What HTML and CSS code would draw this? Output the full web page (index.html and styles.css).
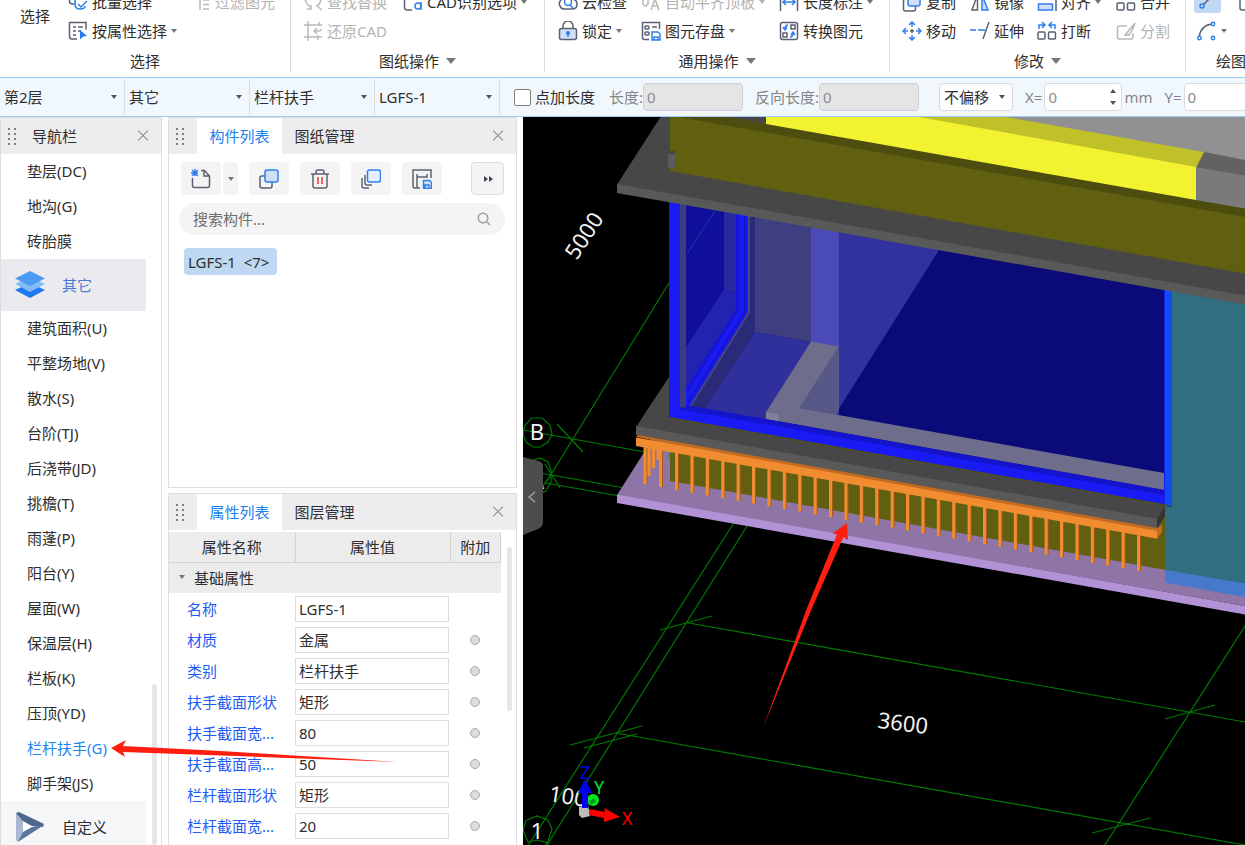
FILE: index.html
```html
<!DOCTYPE html>
<html lang="zh-CN">
<head>
<meta charset="utf-8">
<meta name="viewport" content="width=device-width, initial-scale=1">
<title>栏杆扶手</title>
<link rel="stylesheet" href="styles.css">
</head>
<body>
<div class="app">
  <header class="ribbon">
    <section class="group group-select">
      <div class="tools">
        <button class="tool big">选择</button>
        <div class="stack">
          <button class="tool"><svg class="icon" viewBox="0 0 20 20"><path d="M1.500 4v5q0 3 3 3h2" class="ink"/><path d="M7 8v4q0 5 5 5 5 0 5-3M10 12l3 3 6-6" class="blue"/></svg>批量选择</button>
          <button class="tool"><svg class="icon" viewBox="0 0 20 20"><path d="M9 18H4q-2.500 0-2.500-2.500V1.500h16.500v7M5 6h3M10 6h5M5 10h3M10 10h3M5 14h3" class="ink"/><path d="M12 9l7 6-4 .5-3 3z" class="fill-blue"/></svg>按属性选择<i class="caret"></i></button>
        </div>
        <div class="stack">
          <button class="tool" disabled><svg class="icon" viewBox="0 0 20 20"><path d="M9 4v14M12 8h6M12 12.500h6M12 17h6" class="mute"/></svg>过滤图元</button>
          <span class="tool"></span>
        </div>
      </div>
      <div class="caption">选择</div>
    </section>
    <section class="group group-drawing">
      <div class="tools">
        <div class="stack">
          <button class="tool" disabled><svg class="icon" viewBox="0 0 20 20"><path d="M2 5q0 7 6 10M4 17h4v-4M18 5q0 7-4 9l5 4" class="mute"/></svg>查找替换</button>
          <button class="tool" disabled><svg class="icon" viewBox="0 0 20 20"><path d="M5 0v20M1 4h18M1 16h14M16 1v4M11 10h5q2 0 2-2M14 7l-3 3 3 3M15 14v5M15 16h4" class="mute"/></svg>还原CAD</button>
        </div>
        <div class="stack">
          <button class="tool"><svg class="icon" viewBox="0 0 20 20"><path d="M1.500 2v13q0 3 3 3H9" class="ink"/><circle cx="15" cy="14" r="3" class="blue"/><path d="M18 10v8" class="blue"/></svg>CAD识别选项<i class="caret"></i></button>
          <span class="tool"></span>
        </div>
      </div>
      <div class="caption">图纸操作<i class="caret wide"></i></div>
    </section>
    <section class="group group-common">
      <div class="tools">
        <div class="stack">
          <button class="tool"><svg class="icon" viewBox="0 0 20 20"><path d="M4 7q-4 3-2 7 1 3 4 3h8q5 0 5-5 0-4-4-5" class="ink"/><circle cx="10" cy="10" r="3.500" class="blue"/><path d="M12 13l3 3" class="blue"/></svg>云检查</button>
          <button class="tool"><svg class="icon" viewBox="0 0 20 20"><path d="M5 8V5a5 5 0 0 1 10 0v3" class="ink"/><rect x="1.500" y="7.500" width="17" height="11" rx="2" class="ink tint"/><circle cx="10" cy="12" r="2" class="fill-blue"/><path d="M10 13v3" class="blue"/></svg>锁定<i class="caret"></i></button>
        </div>
        <div class="stack">
          <button class="tool" disabled><svg class="icon" viewBox="0 0 20 20"><path d="M2 4v8q2 4 5 0V4M10 18l4-11 4 11M11 14h6" class="mute"/></svg>自动平齐顶板<i class="caret"></i></button>
          <button class="tool"><svg class="icon" viewBox="0 0 20 20"><path d="M8 18.500H3.500q-2 0-2-2v-15h17V8" class="ink"/><rect x="4" y="5" width="4" height="3" rx="1" class="ink"/><rect x="4" y="11" width="4" height="3" rx="1" class="ink"/><path d="M11 6h5" class="ink"/><path d="M11 11h6l2 2v6h-8zM13 19v-3h4v3" class="blue"/></svg>图元存盘<i class="caret"></i></button>
        </div>
        <div class="stack">
          <button class="tool"><svg class="icon" viewBox="0 0 20 20"><path d="M1.500 4v15M18.500 4v15" class="ink"/><path d="M4 10h12M7 7l-3 3 3 3M13 7l3 3-3 3" class="blue"/></svg>长度标注<i class="caret"></i></button>
          <button class="tool"><svg class="icon" viewBox="0 0 20 20"><rect x="1.500" y="1.500" width="17" height="17" rx="2" class="ink"/><rect x="12" y="4" width="4" height="4" class="ink"/><rect x="4" y="12" width="4" height="4" class="ink"/><path d="M9 4q-3 0-3 4M4 6l2 3 2-3M11 16q3 0 3-4M12 14l2-3 2 3" class="blue"/></svg>转换图元</button>
        </div>
      </div>
      <div class="caption">通用操作<i class="caret wide"></i></div>
    </section>
    <section class="group group-modify">
      <div class="tools">
        <div class="stack">
          <button class="tool"><svg class="icon" viewBox="0 0 20 20"><rect x="1.500" y="7" width="12" height="12" rx="2" class="ink"/><rect x="6" y="2" width="12" height="12" rx="2" class="blue tint"/></svg>复制</button>
          <button class="tool"><svg class="icon" viewBox="0 0 20 20"><path d="M10 1v5M7 4l3-3 3 3M10 14v5M7 16l3 3 3-3M1 10h5M4 7l-3 3 3 3M14 10h5M16 7l3 3-3 3" class="blue"/><path d="M8 10h4M10 8v4" class="ink"/></svg>移动</button>
        </div>
        <div class="stack">
          <button class="tool"><svg class="icon" viewBox="0 0 20 20"><path d="M7.500 3v15H2z" class="ink"/><path d="M12 3v15h6z" class="blue tint"/></svg>镜像</button>
          <button class="tool"><svg class="icon" viewBox="0 0 20 20"><path d="M0 9h6M8 9h7" class="blue"/><path d="M19 1l-6 17" class="ink"/></svg>延伸</button>
        </div>
        <div class="stack">
          <button class="tool"><svg class="icon" viewBox="0 0 20 20"><rect x="1.500" y="12" width="14" height="6" class="blue tint"/><path d="M19 3v16" class="ink"/></svg>对齐<i class="caret"></i></button>
          <button class="tool"><svg class="icon" viewBox="0 0 20 20"><rect x="1" y="11" width="7" height="7" rx="1" class="ink"/><rect x="11.500" y="11" width="7" height="7" rx="1" class="ink"/><path d="M2 8V4h5M5 1l3 3-3 3M18 8V4h-5M15 1l-3 3 3 3" class="blue"/></svg>打断</button>
        </div>
        <div class="stack">
          <button class="tool"><svg class="icon" viewBox="0 0 20 20"><path d="M2 7V3h15v4" class="ink"/><rect x="1" y="11" width="7" height="7" rx="1" class="ink"/><rect x="11.500" y="11" width="7" height="7" rx="1" class="ink"/></svg>合并</button>
          <button class="tool" disabled><svg class="icon" viewBox="0 0 20 20"><path d="M11 5H3Q1.500 5 1.500 7v9q0 2 2 2H15q2 0 2-2v-4M19 2L9 14h4q4-5 6-12z" class="mute"/></svg>分割</button>
        </div>
      </div>
      <div class="caption">修改<i class="caret wide"></i></div>
    </section>
    <section class="group group-draw">
      <div class="tools">
        <div class="stack">
          <button class="tool on" aria-label="直线"><svg class="icon" viewBox="0 0 20 20"><path d="M5 15L17 3" class="ink"/><circle cx="4" cy="16" r="2" class="blue"/></svg></button>
          <button class="tool pad" aria-label="弧线"><svg class="icon" viewBox="0 0 20 20"><path d="M2 16Q4 4 15 3" class="ink"/><circle cx="2.500" cy="17" r="1.700" class="blue"/><circle cx="16" cy="3" r="1.700" class="blue"/><circle cx="16" cy="17" r="1.700" class="blue"/></svg><i class="caret"></i></button>
        </div>
        <div class="stack">
          <button class="tool" aria-label="矩形"><svg class="icon" viewBox="0 0 20 20"><rect x="1" y="1" width="17" height="17" rx="2" class="ink"/></svg></button>
          <span class="tool"></span>
        </div>
      </div>
      <div class="caption">绘图</div>
    </section>
  </header>

  <form class="options">
    <span class="pick flat"><select aria-label="楼层"><option>第2层</option></select></span>
    <span class="pick flat"><select aria-label="构件大类"><option>其它</option></select></span>
    <span class="pick flat"><select aria-label="构件类型"><option>栏杆扶手</option></select></span>
    <span class="pick flat"><select aria-label="构件"><option>LGFS-1</option></select></span>
    <label class="check"><input type="checkbox">点加长度</label>
    <label class="field">长度:<input type="text" value="0" disabled></label>
    <label class="field">反向长度:<input type="text" value="0" disabled></label>
    <span class="rule"></span>
    <span class="pick boxed"><select aria-label="偏移方式"><option>不偏移</option></select></span>
    <label class="field near">X=<span class="spin"><input type="text" value="0"></span>mm</label>
    <label class="field near">Y=<span class="spin"><input type="text" value="0"></span>mm</label>
  </form>

  <main class="workspace">
    <nav class="panel nav">
      <div class="panel-head"><i class="grip"></i><h2>导航栏</h2><button class="close" aria-label="关闭"></button></div>
      <div class="nav-body">
        <div class="nav-list">
          <a href="#">垫层(DC)</a>
          <a href="#">地沟(G)</a>
          <a href="#">砖胎膜</a>
          <button class="category current"><svg viewBox="0 0 32 32"><path d="M16 14l15 7-15 8-15-8z" fill="#1f78f0"/><path d="M16 8l15 7-15 8-15-8z" fill="#83bbf5"/><path d="M16 2l15 7.500-15 7.500L1 9.500z" fill="#4b9bf2"/></svg>其它</button>
          <a href="#">建筑面积(U)</a>
          <a href="#">平整场地(V)</a>
          <a href="#">散水(S)</a>
          <a href="#">台阶(TJ)</a>
          <a href="#">后浇带(JD)</a>
          <a href="#">挑檐(T)</a>
          <a href="#">雨蓬(P)</a>
          <a href="#">阳台(Y)</a>
          <a href="#">屋面(W)</a>
          <a href="#">保温层(H)</a>
          <a href="#">栏板(K)</a>
          <a href="#">压顶(YD)</a>
          <a href="#" class="active">栏杆扶手(G)</a>
          <a href="#">脚手架(JS)</a>
          <button class="category"><svg viewBox="0 0 32 32"><path d="M2 2l7 5v18l-5 6-2-2z" fill="#aab8d2"/><path d="M2 2l3-1 25 12-1 3-11-1L9 10z" fill="#4f678f"/><path d="M9 21v-9l9 4z" fill="#fff"/><path d="M9 21l9-5 12-2L4 31z" fill="#5d749d"/></svg>自定义</button>
        </div>
        <i class="thumb nav-thumb"></i>
      </div>
    </nav>

    <div class="side">
      <section class="panel components">
        <div class="panel-head"><i class="grip"></i><div class="tabs"><button class="tab on">构件列表</button><button class="tab">图纸管理</button></div><button class="close" aria-label="关闭"></button></div>
        <div class="bar">
          <span class="split"><button class="act" aria-label="新建"><svg class="icon" viewBox="0 0 20 20"><path d="M1.500 9v7.500q0 2 2 2h13q2 0 2-2V7l-5-5.500H10M13 2v5h5" class="ink"/><path d="M4 0v7M1 1l6 6M7 1L1 7M0 4h7" class="blue"/></svg></button><button class="act slim" aria-label="新建选项"><i class="caret"></i></button></span>
          <button class="act" aria-label="复制"><svg class="icon" viewBox="0 0 20 20"><rect x="1" y="7" width="12" height="12" rx="2" class="ink"/><rect x="6" y="1" width="13" height="12" rx="2" class="blue tint"/></svg></button>
          <button class="act" aria-label="删除"><svg class="icon" viewBox="0 0 20 20"><path d="M1 5h18M6 5V3q0-2 2-2h4q2 0 2 2v2M3 5v12q0 2 2 2h10q2 0 2-2V5" class="ink"/><path d="M8 8v7M12 8v7" stroke="#e04444" fill="none" stroke-width="1.600"/></svg></button>
          <button class="act" aria-label="层间复制"><svg class="icon" viewBox="0 0 20 20"><path d="M1 9v8q0 2 2 2h5M4 6v8q0 2 2 2h5" class="ink"/><rect x="6.500" y="1" width="13" height="12" rx="2" class="blue tint-light"/></svg></button>
          <button class="act" aria-label="存档"><svg class="icon" viewBox="0 0 20 20"><path d="M8 19H3q-2 0-2-2V1h18v8M5 19V5M15 5v4M5 8h10" class="ink"/><path d="M11.500 11.500h6l2 2v6h-8zM13 19v-3h4v3" class="blue tint"/></svg></button>
          <button class="act more" aria-label="更多"><svg class="icon" viewBox="0 0 20 20"><path d="M6 7l4 3-4 3zM11 7l4 3-4 3z" fill="#3d4250"/></svg></button>
        </div>
        <div class="search"><input type="text" placeholder="搜索构件..." aria-label="搜索构件"><svg viewBox="0 0 14 14"><circle cx="6" cy="6" r="4.700"/><path d="M10 10l3 3"/></svg></div>
        <button class="chip">LGFS-1  &lt;7&gt;</button>
      </section>

      <section class="panel props">
        <div class="panel-head"><i class="grip"></i><div class="tabs"><button class="tab on">属性列表</button><button class="tab">图层管理</button></div><button class="close" aria-label="关闭"></button></div>
        <div class="props-body">
          <table>
            <colgroup><col class="c-name"><col class="c-value"><col class="c-extra"></colgroup>
            <thead><tr><th>属性名称</th><th>属性值</th><th>附加</th></tr></thead>
            <tbody>
              <tr class="section"><td colspan="3"><i class="caret"></i>基础属性</td></tr>
              <tr><td><label for="p1">名称</label></td><td><input id="p1" type="text" value="LGFS-1"></td><td></td></tr>
              <tr><td><label for="p2">材质</label></td><td><input id="p2" type="text" value="金属"></td><td><input type="checkbox" aria-label="附加材质"></td></tr>
              <tr><td><label for="p3">类别</label></td><td><input id="p3" type="text" value="栏杆扶手"></td><td><input type="checkbox" aria-label="附加类别"></td></tr>
              <tr><td><label for="p4">扶手截面形状</label></td><td><input id="p4" type="text" value="矩形"></td><td><input type="checkbox" aria-label="附加扶手截面形状"></td></tr>
              <tr><td><label for="p5">扶手截面宽...</label></td><td><input id="p5" type="text" value="80"></td><td><input type="checkbox" aria-label="附加扶手截面宽"></td></tr>
              <tr><td><label for="p6">扶手截面高...</label></td><td><input id="p6" type="text" value="50"></td><td><input type="checkbox" aria-label="附加扶手截面高"></td></tr>
              <tr><td><label for="p7">栏杆截面形状</label></td><td><input id="p7" type="text" value="矩形"></td><td><input type="checkbox" aria-label="附加栏杆截面形状"></td></tr>
              <tr><td><label for="p8">栏杆截面宽...</label></td><td><input id="p8" type="text" value="20"></td><td><input type="checkbox" aria-label="附加栏杆截面宽"></td></tr>
            </tbody>
          </table>
          <i class="thumb props-thumb"></i>
        </div>
      </section>
    </div>

    <section class="viewport">
      <svg class="scene" viewBox="523 117 722 728" preserveAspectRatio="xMinYMin slice">
        <defs>
          <path id="balusters" d="M645 444v40M660.500 446v41M676.500 449v41m15.400-38.300v41m15.400-38.300v41m15.400-38.300v41m15.400-38.300v41m15.400-38.300v41m15.400-38.300v41m15.400-38.300v41m15.400-38.300v41m15.400-38.300v41m15.400-38.300v41m15.400-38.300v41m15.400-38.300v41m15.400-38.300v41m15.400-38.300v41m15.400-38.300v41m15.400-38.300v41m15.400-38.300v41m15.400-38.300v41m15.400-38.300v41m15.400-38.300v41m15.400-38.300v41m15.400-38.300v41m15.400-38.300v41m15.400-38.300v41m15.400-38.300v41m15.400-38.300v41m15.400-38.300v41m15.400-38.300v41m15.400-38.300v41m15.400-38.300v41"/>
        </defs>
        <!-- axis grid -->
        <g class="grid">
          <path d="M669 283L547 481M523 430L645 452M557 424L583 452M540 473L625 488M545 483L620 496M545 464L560 488M540 490L554 470"/>
          <path d="M735 521L526 849M749 523L542 853"/>
          <path d="M660 630L712 616M686 622.500L1245 722M570 745L642 726M584 748L637 734M616 733L1245 845"/>
          <path d="M1247 623L1103 848M1165 719L1215 705M1092 833L1150 818"/>
          <path d="M532 418h10l8 7 2 9-4 8-8 5h-7l-7-5-3-8 2-9z"/>
          <path d="M531 461l9-3 8 4 3 8v12l-5 9-8 3-8-2"/>
          <path d="M527 820l10-4 11 4 4 9-4 12-4 7M526 820l-3 10 5 12 9-2 12 3"/>
        </g>
        <g class="dims">
          <text x="583" y="244" transform="rotate(-57 583 235)" text-anchor="middle">5000</text>
          <text x="903" y="731" transform="rotate(7 903 723)" text-anchor="middle">3600</text>
          <text x="568" y="804" transform="rotate(9 568 796)" text-anchor="middle">100</text>
          <text x="537" y="440" text-anchor="middle">B</text>
          <text x="537" y="839" text-anchor="middle">1</text>
          <text x="537" y="489" text-anchor="middle">A</text>
        </g>
        <!-- lower purple plate and parapet -->
        <path d="M652 440L617 495L1245 606V560L1165 530z" fill="#8f75a6"/>
        <path d="M617 494.500L1245 606v8.500L617 503z" fill="#b391d6"/>
        <path d="M668 447h7v12h-7z" fill="#77777a"/>
        <path d="M670 456V481L1166 570V505L674 440z" fill="#606010"/>
        <!-- lower slab -->
        <path d="M669 377L636 427L1157 519L1166 506z" fill="#474747"/>
        <path d="M636 426L1157 519v9.500L636 435z" fill="#595959"/>
        <path d="M1157 519L1165 506v10L1157 529z" fill="#343434"/>
        <!-- railing -->
        <use href="#balusters" x="1" class="bars shade"/>
        <use href="#balusters" class="bars"/>
        <path d="M649 446v30M653.500 446v22M658 446v14" class="bars"/>
        <path d="M636 437L638 435L1157 528L1162 525v7L1157 539z" fill="#c46b22"/>
        <path d="M636 437.500L1157 531v7.500L636 446z" fill="#f28c30"/>
        <!-- window -->
        <path d="M669 195L1172 285V507L669 418.500z" fill="#50501a"/>
        <path d="M669 195L1172 285V505.500L669 417z" fill="#1a1af5"/>
        <path d="M680 195L1164 285V495L680 409z" fill="#1414cc"/>
        <path d="M686 195L1164 285V490L686 406z" fill="#0a0a78"/>
        <path d="M680 195h6v213l-6-1z" fill="#3c3c80"/>
        <path d="M686 200H724V292L686 349z" fill="#0f0f9b"/>
        <path d="M715 211L687 254" stroke="#1e3c96" fill="none"/>
        <path d="M724 205h12v87l-12-2z" fill="#2828a0"/>
        <path d="M724 290l12 2v18L686 388V347z" fill="#2323b2"/>
        <path d="M736 205h12V312L689 407L686 405V388L736 310z" fill="#1a1af2"/>
        <path d="M737.500 205V310L687 391M745 205V312L688 402" stroke="#1414cf" stroke-width="2" fill="none"/>
        <path d="M748 207h2V313L692 407h-3L748 312z" fill="#484880"/>
        <path d="M750 207h5V332L706 409L691 407L750 313z" fill="#2a2a78"/>
        <path d="M755 207H811V342L755 332z" fill="#3e3e80"/>
        <path d="M755 332L811 342L766 412V421L704 410z" fill="#30309c"/>
        <path d="M811 220h28V347l-28-5z" fill="#4a4ab8"/>
        <path d="M839 222L945 241L939 250L835 415H839z" fill="#32329e"/>
        <path d="M839 346L798 408L836 415L839 410z" fill="#585888"/>
        <path d="M811 341.500L839 346.500L799 408L1164 473V490L766 419V412z" fill="#6e6e8c"/>
        <path d="M766 412l13 2v7l-13-2z" fill="#80809b"/>
        <path d="M686 405L1164 490v5L686 410z" fill="#1414cc"/>
        <path d="M1165 280h7V506l-7-1z" fill="#104cf0"/>
        <path d="M1172 280L1245 295V584L1165 570V506L1172 507z" fill="#316f80"/>
        <path d="M1165 570L1245 583.500V597L1165 582.500z" fill="#4678cc"/>
        <!-- upper slab and parapet -->
        <path d="M660.500 117L617 184.500L1245 296V117z" fill="#474747"/>
        <path d="M617 184L1245 295.500v9L617 193z" fill="#595959"/>
        <path d="M670 117H727L1245 208.500V273.500L670 171z" fill="#606010"/>
        <path d="M679 117H727L1245 208.500v8.500L684 118z" fill="#4d4d10"/>
        <path d="M668 153h7v16l-7-1z" fill="#5c5c5c"/>
        <path d="M668 151h7v3h-7z" fill="#474733"/>
        <path d="M1000 117H1245V161L1204 153z" fill="#919191"/>
        <path d="M1204 152L1245 160v16L1196 167z" fill="#626262"/>
        <path d="M1196 167L1245 175.500v33L1196 200z" fill="#7a7a7a"/>
        <path d="M910 117H1006L1204 152L1196 168z" fill="#c0c028"/>
        <path d="M766 117H919L1196 167V200L766 124z" fill="#f2f230"/>
        <!-- coordinate tripod -->
        <path d="M579 807l9-2 2 11-8 2-3-3z" fill="#bdbdbd"/>
        <circle cx="593" cy="800" r="6" fill="#00e820"/>
        <path d="M590 803l5-3" stroke="#009c18" stroke-width="4" fill="none"/>
        <path d="M582 808V793h-4L585 779l7 14h-4v15z" fill="#0000f2"/>
        <path d="M589 809l16 3-1-4 16 9-16 5v-4l-15-3z" fill="#f00"/>
        <g class="axes"><text x="580" y="779" fill="#0000e8">Z</text><text x="594" y="794" fill="#00e820">Y</text><text x="622" y="825" fill="#f00">X</text></g>
        <path d="M847 523L848 540L843.500 537L812 608L763 728L807 608L837 534.500L832.500 533.500z" fill="#ff1e10"/>
      </svg>
      <button class="collapse" aria-label="收起"><svg viewBox="0 0 20 78"><path d="M0 0L15 4Q20 5 20 9V65Q20 70 15 72L0 78z" fill="#4d4d4d"/><path d="M12 35L6 40l6 5" stroke="#a8a8a8" stroke-width="1.300" fill="none"/></svg></button>
    </section>

    <svg class="pointer" viewBox="0 0 288 24"><path d="M0 9L15 1L12 7L110 12L287 23L190 19.500L12 13L14 18z" fill="#ff1e10"/></svg>
  </main>
</div>
</body>
</html>
```
FILE: styles.css
```css
* { box-sizing: border-box; }

body {
  margin: 0;
  background: #fff;
  color: #2e2e2e;
  font-family: "Noto Sans", "Noto Sans CJK SC", sans-serif;
  font-size: 15px;
  line-height: 20px;
}

button, input, select { font: inherit; color: inherit; }
button { border: 0; padding: 0; background: none; }
a { color: inherit; text-decoration: none; }

.app { display: flex; flex-direction: column; height: 100vh; overflow: hidden; }

/* shared marks */
.icon { width: 20px; height: 20px; flex: none; }
.ink, .blue, .mute { fill: none; stroke: #5a6172; stroke-width: 1.5; }
.blue { stroke: #2f80ed; }
.mute { stroke: #b9b9b9; }
.tint { fill: #cfdff7; }
.tint-light { fill: #e4effd; }
.fill-blue { fill: #2378ea; }
.caret {
  flex: none;
  width: 0;
  border: 3px solid transparent;
  border-top: 4px solid #777;
  border-bottom: 0;
}
.caret.wide { border-width: 6px 5px 0; }

/* ribbon */
.ribbon {
  flex: none;
  display: grid;
  grid-template-columns: 291px 254px 345px 296px 1fr;
  grid-template-rows: 72px;
  height: 77px;
  overflow: hidden;
}
.group { display: flex; flex-direction: column; justify-content: flex-end; min-width: 0; border-right: 1px solid #dcdcdc; }
.group:last-child { border: 0; }
.tools { flex: none; display: grid; padding-left: 12px; align-items: center; }
.group-select .tools { grid-template-columns: 48px 123px 1fr; padding-left: 20px; }
.group-drawing .tools { grid-template-columns: 100px 1fr; }
.group-common .tools { grid-template-columns: 83px 138px 1fr; padding-left: 13px; }
.group-modify .tools { grid-template-columns: 68px 67px 79px 1fr; }
.group-draw .tools { grid-template-columns: 45px 1fr; padding-left: 8px; }
.tool { display: flex; align-items: center; gap: 4px; height: 29px; white-space: nowrap; }
.tool.big { height: 26px; }
.tool:disabled { color: #b4b4b4; }
.tool:disabled .caret { border-top-color: #b4b4b4; }
.tool.on { width: 27px; height: 26px; margin-bottom: 3px; justify-content: center; background: #c0d8f2; border-radius: 3px; }
.tool.pad { padding-left: 3px; }
.caption { flex: none; display: flex; align-items: center; justify-content: center; gap: 7px; height: 22px; margin-top: 5px; }
.group-draw .caption { justify-content: start; padding-left: 30px; white-space: nowrap; }

/* options bar */
.options {
  flex: none;
  display: flex;
  align-items: center;
  height: 40px;
  border: solid #9ccbf5;
  border-width: 1px 0;
  background: #f1f8fd;
  white-space: nowrap;
  overflow: hidden;
}
.pick { position: relative; flex: none; }
.pick select { appearance: none; width: 100%; height: 100%; border: 0; padding: 0 4px; background: none; }
.pick::after {
  content: "";
  position: absolute;
  right: 7px;
  top: 50%;
  margin-top: -2px;
  border: solid transparent;
  border-width: 4px 3px 0;
  border-top-color: #4d5262;
  pointer-events: none;
}
.flat { width: 125px; height: 36px; border-right: 1px solid #d9dee3; }
.boxed { width: 74px; height: 28px; margin-right: 12px; border: 1px solid #d8dce2; border-radius: 4px; background: #fff; }
.check { display: flex; align-items: center; gap: 4px; margin: 0 14px; }
.check input { appearance: none; width: 17px; height: 17px; margin: 0; border: 1px solid #808080; border-radius: 2px; background: #fff; }
.field { display: flex; align-items: center; margin-right: 12px; color: #858585; }
.field input { width: 100px; height: 28px; padding: 0 3px; border: 1px solid #cbd0dc; border-radius: 4px; background: #e5e5e5; color: #8c8c8c; }
.near { gap: 2px; }
.spin { position: relative; }
.spin input { display: block; width: 78px; background: #fff; border-color: #d8dce2; }
.spin::before, .spin::after {
  content: "";
  position: absolute;
  right: 6px;
  border: solid transparent;
}
.spin::before { top: 6px; border-width: 0 3px 4px; border-bottom-color: #4d5262; }
.spin::after { bottom: 6px; border-width: 4px 3px 0; border-top-color: #4d5262; }
.rule { width: 1px; height: 32px; margin: 0 4px; background: #d5d9df; }

/* workspace */
.workspace {
  position: relative;
  flex: 1;
  min-height: 0;
  display: grid;
  grid-template-columns: 162px 349px 1fr;
  grid-template-rows: minmax(0, 1fr);
  column-gap: 6px;
}
.panel { border: 1px solid #dedede; overflow: hidden; min-width: 0; }
.panel-head { flex: none; display: flex; align-items: center; height: 36px; padding-right: 12px; background: #ededf0; }
.panel-head h2 { margin: 0; font-size: 15px; font-weight: 400; }
.grip {
  width: 8px;
  height: 17px;
  margin: 0 16px 0 7px;
  background: linear-gradient(#808080, #808080) 0 0 / 2px 100%, linear-gradient(#808080, #808080) 6px 0 / 2px 100%;
  background-repeat: no-repeat;
  -webkit-mask: repeating-linear-gradient(#000 0 2px, transparent 2px 5px);
  mask: repeating-linear-gradient(#000 0 2px, transparent 2px 5px);
}
.close { position: relative; width: 12px; height: 12px; margin-left: auto; }
.close::before, .close::after {
  content: "";
  position: absolute;
  left: -1px;
  top: 5px;
  width: 14px;
  height: 1px;
  background: #8c8c8c;
  transform: rotate(45deg);
}
.close::after { transform: rotate(-45deg); }
.thumb { width: 5px; border-radius: 3px; background: #e6e6e6; }

.nav { display: flex; flex-direction: column; border-bottom: 0; }
.nav-body { flex: 1; min-height: 0; display: flex; }
.nav-list { flex: 1; margin-right: 6px; }
.nav-list a { display: block; height: 35px; padding-left: 26px; line-height: 35px; }
.nav-list .active { color: #1f87f0; }
.category { display: flex; align-items: center; gap: 16px; width: 100%; height: 52px; padding-left: 13px; background: #f4f6f8; }
.category svg { width: 32px; height: 32px; }
.category.current { background: #ebebef; color: #4a78d8; }
.nav-thumb { margin: 530px 4px 0 0; }

.side { display: grid; grid-template-rows: 371px minmax(0, 1fr); row-gap: 5px; min-width: 0; }
.components, .props { display: flex; flex-direction: column; }
.props { border-bottom: 0; }
.side .grip { margin: 0 13px 0 7px; }
.tabs { display: flex; height: 100%; }
.tab { width: 85px; }
.tab.on { background: #fff; color: #2080ee; }
.bar { display: flex; gap: 11px; padding: 8px 12px; }
.act { display: flex; align-items: center; justify-content: center; width: 40px; height: 33px; border-radius: 4px; background: #f4f4f4; }
.split { display: flex; gap: 2px; }
.act.slim { width: 15px; }
.act.more { width: 33px; margin-left: auto; border: 1px solid #dcdcdc; }
.search { display: flex; align-items: center; height: 32px; margin: 0 11px 0 10px; padding: 0 14px; border-radius: 16px; background: #f4f4f4; }
.search input { flex: 1; min-width: 0; border: 0; padding: 0; background: none; }
.search input::placeholder { color: #6e6e6e; }
.search svg { width: 14px; height: 14px; fill: none; stroke: #a0a0a0; stroke-width: 1.6; }
.chip { align-self: start; height: 27px; margin: 13px 15px; padding: 0 8px 0 4px; border-radius: 4px; background: #bfd8f1; white-space: pre; }

.props-body { display: flex; padding-top: 2px; }
table { flex: none; width: 332px; border-collapse: collapse; table-layout: fixed; }
.c-name { width: 126px; }
.c-value { width: 155px; }
th { height: 30px; padding: 0; border: solid #d4d4d4; border-width: 0 1px 1px 0; background: #ececec; font-weight: 400; }
td { height: 31px; padding: 0; }
td:first-child { padding-left: 18px; color: #1d5cf5; }
td:last-child { text-align: center; }
td input[type="text"] { display: block; width: 154px; height: 26px; padding: 0 3px; border: 1px solid #dedede; background: #fff; }
td input[type="checkbox"] { appearance: none; display: block; width: 10px; height: 10px; margin: 0 auto; border: 1px solid #aaa; border-radius: 50%; background: #dcdcdc; }
td label { display: block; white-space: nowrap; }
.section td:first-child { padding-left: 10px; background: #ececec; color: #2e2e2e; text-align: left; }
.section .caret { display: inline-block; margin-right: 9px; vertical-align: 5px; }
.props-thumb { height: 164px; margin: 15px 0 0 6px; }

/* model view */
.viewport { position: relative; min-width: 0; background: #000; overflow: hidden; }
.scene { display: block; width: 100%; height: 100%; }
.grid path { fill: none; stroke: #007a00; stroke-width: 1.2; }
.dims text { fill: #f2f2f2; font-size: 22px; }
.axes text { font-size: 18px; }
.bars { fill: none; stroke: #f28c30; stroke-width: 3; }
.bars.shade { stroke: #a85c1c; }
.collapse { position: absolute; left: 0; top: 340px; width: 20px; height: 78px; }
.collapse svg { display: block; width: 20px; height: 78px; }
.pointer { position: absolute; left: 111px; top: 622px; width: 288px; height: 24px; pointer-events: none; }
```
